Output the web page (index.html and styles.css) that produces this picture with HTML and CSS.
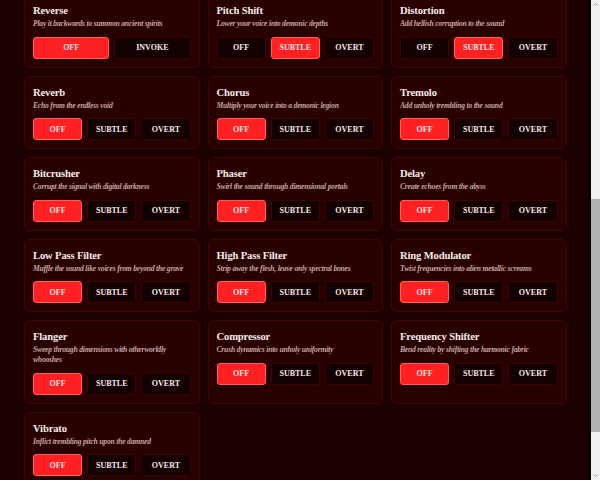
FILE: index.html
```html
<!DOCTYPE html>
<html lang="en">
<head>
<meta charset="utf-8">
<title>Infernal Voice Effects</title>
<link rel="stylesheet" href="styles.css">
</head>
<body>
<main class="page">
  <header class="hero">
    <h1 class="hero-title">Infernal Voice Changer</h1>
    <p class="hero-sub">Transform your voice into something from the depths</p>
    <section class="panel">
      <div class="panel-head">Summoning Circle</div>
      <div class="record">RECORD</div>
      <p class="panel-note">Speak, and let the darkness answer</p>
    </section>
    <h2 class="section-title">Effects</h2>
  </header>

  <section class="grid" id="effects">
    <article class="card">
      <h3 class="card-title">Reverse</h3>
      <p class="card-desc">Play it backwards to summon ancient spirits</p>
      <div class="btns"><button class="btn on">OFF</button><button class="btn">INVOKE</button></div>
    </article>
    <article class="card">
      <h3 class="card-title">Pitch Shift</h3>
      <p class="card-desc">Lower your voice into demonic depths</p>
      <div class="btns"><button class="btn">OFF</button><button class="btn on">SUBTLE</button><button class="btn">OVERT</button></div>
    </article>
    <article class="card">
      <h3 class="card-title">Distortion</h3>
      <p class="card-desc">Add hellish corruption to the sound</p>
      <div class="btns"><button class="btn">OFF</button><button class="btn on">SUBTLE</button><button class="btn">OVERT</button></div>
    </article>

    <article class="card">
      <h3 class="card-title">Reverb</h3>
      <p class="card-desc">Echo from the endless void</p>
      <div class="btns"><button class="btn on">OFF</button><button class="btn">SUBTLE</button><button class="btn">OVERT</button></div>
    </article>
    <article class="card">
      <h3 class="card-title">Chorus</h3>
      <p class="card-desc">Multiply your voice into a demonic legion</p>
      <div class="btns"><button class="btn on">OFF</button><button class="btn">SUBTLE</button><button class="btn">OVERT</button></div>
    </article>
    <article class="card">
      <h3 class="card-title">Tremolo</h3>
      <p class="card-desc">Add unholy trembling to the sound</p>
      <div class="btns"><button class="btn on">OFF</button><button class="btn">SUBTLE</button><button class="btn">OVERT</button></div>
    </article>

    <article class="card">
      <h3 class="card-title">Bitcrusher</h3>
      <p class="card-desc">Corrupt the signal with digital darkness</p>
      <div class="btns"><button class="btn on">OFF</button><button class="btn">SUBTLE</button><button class="btn">OVERT</button></div>
    </article>
    <article class="card">
      <h3 class="card-title">Phaser</h3>
      <p class="card-desc">Swirl the sound through dimensional portals</p>
      <div class="btns"><button class="btn on">OFF</button><button class="btn">SUBTLE</button><button class="btn">OVERT</button></div>
    </article>
    <article class="card">
      <h3 class="card-title">Delay</h3>
      <p class="card-desc">Create echoes from the abyss</p>
      <div class="btns"><button class="btn on">OFF</button><button class="btn">SUBTLE</button><button class="btn">OVERT</button></div>
    </article>

    <article class="card">
      <h3 class="card-title">Low Pass Filter</h3>
      <p class="card-desc">Muffle the sound like voices from beyond the grave</p>
      <div class="btns"><button class="btn on">OFF</button><button class="btn">SUBTLE</button><button class="btn">OVERT</button></div>
    </article>
    <article class="card">
      <h3 class="card-title">High Pass Filter</h3>
      <p class="card-desc">Strip away the flesh, leave only spectral bones</p>
      <div class="btns"><button class="btn on">OFF</button><button class="btn">SUBTLE</button><button class="btn">OVERT</button></div>
    </article>
    <article class="card">
      <h3 class="card-title">Ring Modulator</h3>
      <p class="card-desc">Twist frequencies into alien metallic screams</p>
      <div class="btns"><button class="btn on">OFF</button><button class="btn">SUBTLE</button><button class="btn">OVERT</button></div>
    </article>

    <article class="card">
      <h3 class="card-title">Flanger</h3>
      <p class="card-desc">Sweep through dimensions with otherworldly whooshes</p>
      <div class="btns"><button class="btn on">OFF</button><button class="btn">SUBTLE</button><button class="btn">OVERT</button></div>
    </article>
    <article class="card">
      <h3 class="card-title">Compressor</h3>
      <p class="card-desc">Crush dynamics into unholy uniformity</p>
      <div class="btns"><button class="btn on">OFF</button><button class="btn">SUBTLE</button><button class="btn">OVERT</button></div>
    </article>
    <article class="card">
      <h3 class="card-title">Frequency Shifter</h3>
      <p class="card-desc">Bend reality by shifting the harmonic fabric</p>
      <div class="btns"><button class="btn on">OFF</button><button class="btn">SUBTLE</button><button class="btn">OVERT</button></div>
    </article>

    <article class="card">
      <h3 class="card-title">Vibrato</h3>
      <p class="card-desc">Inflict trembling pitch upon the damned</p>
      <div class="btns"><button class="btn on">OFF</button><button class="btn">SUBTLE</button><button class="btn">OVERT</button></div>
    </article>
  </section>
</main>

<div class="scrollbar" aria-hidden="true">
  <svg class="sb-arrow" width="9" height="9" viewBox="0 0 9 9"><path d="M2.5 5.5 L4.5 3.5 L6.5 5.5" fill="none" stroke="#a3a3a3" stroke-width="1"/></svg>
  <div class="sb-track"><div class="sb-thumb"></div></div>
  <svg class="sb-arrow" width="9" height="9" viewBox="0 0 9 9"><path d="M2.5 3.5 L4.5 5.5 L6.5 3.5" fill="none" stroke="#a3a3a3" stroke-width="1"/></svg>
</div>

<script src="scroll.js"></script>
</body>
</html>
```

FILE: styles.css
```css
html, body {
  margin: 0;
  padding: 0;
  background: #1c0000;
}

body {
  font-family: "Liberation Serif", "Times New Roman", serif;
  color: #f3e4e4;
}

.page {
  padding: 24px 33.5px 76px 24px;
}

.hero {
  display: flex;
  flex-direction: column;
  align-items: center;
  gap: 10px;
  min-height: 335px;
}

.hero-title {
  margin: 16px 0 0;
  font-size: 26px;
  font-weight: bold;
  color: #ff2a2a;
}

.hero-sub {
  margin: 0;
  font-size: 11px;
  font-style: italic;
  color: #c4a4a4;
}

.panel {
  align-self: stretch;
  display: flex;
  flex-direction: column;
  align-items: center;
  gap: 12px;
  padding: 18px;
  background: #2a0000;
  border: 1px solid #400808;
  border-radius: 6px;
}

.panel-head {
  font-size: 13px;
  font-weight: bold;
}

.record {
  width: 90px;
  height: 90px;
  border-radius: 50%;
  background: #ff2121;
  border: 2px solid #ff5a5a;
  display: flex;
  align-items: center;
  justify-content: center;
  font-size: 11px;
  font-weight: bold;
  color: #ffe6e6;
}

.panel-note {
  margin: 0;
  font-size: 9px;
  font-style: italic;
  color: #c4a4a4;
}

.section-title {
  align-self: flex-start;
  margin: 8px 0 8px;
  font-size: 14px;
  font-weight: bold;
}

.grid {
  display: grid;
  grid-template-columns: repeat(3, 1fr);
  gap: 8px;
}

.card {
  background: #290000;
  border: 1px solid #3e0606;
  border-radius: 6px;
  padding: 10px 8px 8px 8px;
  display: flex;
  flex-direction: column;
}

.card-title {
  margin: 0 0 2px;
  font-size: 10.6px;
  line-height: 12px;
  letter-spacing: -0.15px;
  font-weight: bold;
  color: #f6ebeb;
}

.card-desc {
  margin: 0 0 7.5px;
  font-size: 7.6px;
  line-height: 10px;
  letter-spacing: -0.2px;
  font-style: italic;
  font-weight: bold;
  color: #c6a6a6;
}

.btns {
  display: flex;
  gap: 5px;
}

.btn {
  flex: 1 1 0;
  height: 22px;
  padding: 0;
  margin: 0;
  background: #130000;
  border: 1px solid #3a0404;
  border-radius: 3px;
  font-family: "Liberation Serif", "Times New Roman", serif;
  font-size: 8px;
  font-weight: bold;
  color: #f4e8e8;
}

.btn.on {
  background: #ff2121;
  border-color: #ff5c5c;
  color: #ffe4e4;
}

/* drawn browser scrollbar, overlaid on the right edge of the viewport */
.scrollbar {
  position: fixed;
  top: 0;
  right: 0;
  bottom: 0;
  width: 12px;
  box-sizing: border-box;
  border-left: 3px solid #0e0000;
  background: #f1f1f1;
  display: flex;
  flex-direction: column;
}

.sb-arrow {
  flex: 0 0 auto;
  display: block;
}

.sb-track {
  flex: 1 1 auto;
  display: flex;
  flex-direction: column;
  padding-top: 190px;
}

.sb-thumb {
  height: 233px;
  background: #b0b0b0;
}
```

FILE: scroll.js
```js
(function () {
  var grid = document.getElementById('effects');
  var target = grid.getBoundingClientRect().top + window.scrollY + 6;
  window.scrollTo(0, target);
  window.addEventListener('load', function () {
    window.scrollTo(0, target);
  });
})();
```
